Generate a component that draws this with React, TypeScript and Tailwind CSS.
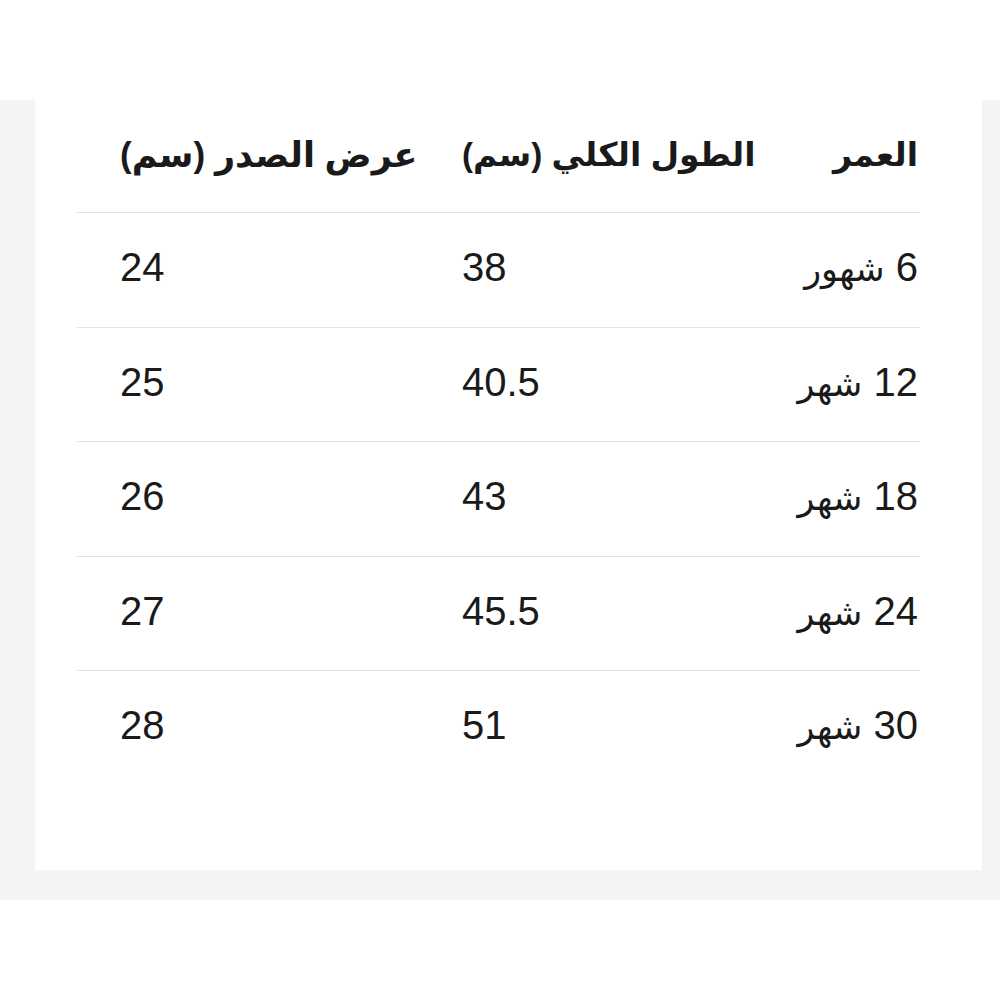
const rows: [string, string, string, string][] = [
  ["6", "شهور", "38", "24"],
  ["12", "شهر", "40.5", "25"],
  ["18", "شهر", "43", "26"],
  ["24", "شهر", "45.5", "27"],
  ["30", "شهر", "51", "28"],
];

const cols = "grid grid-cols-[140px_318px_385px] items-center";

export default function App() {
  return (
    <div className="h-[1000px] w-[1000px] bg-white pt-[100px] font-['Liberation_Sans','DejaVu_Sans',sans-serif] text-[#1a1a1a]">
      <div className="bg-[#f5f4f2] pb-[30px] pl-[35px] pr-[18px]">
        <div className="h-[770px] bg-white pl-[42px] pr-[62px]">
          <div dir="rtl" className={`${cols} h-[112px] pb-[2px] text-[33px] font-bold`}>
            <div className="pr-[2px] text-right">العمر</div>
            <div className="text-left">
              <span dir="rtl">الطول الكلي (سم)</span>
            </div>
            <div className="pl-[43px] text-left">
              <span dir="rtl" className="text-[35px]">عرض الصدر (سم)</span>
            </div>
          </div>
          {rows.map(([num, unit, length, chest]) => (
            <div
              key={num}
              dir="rtl"
              className={`${cols} h-[114.5px] border-t border-[#e2e2e2] pb-[5px] text-[40px]`}
            >
              <div className="pr-[2px] text-right">
                {num} <span className="text-[35px]">{unit}</span>
              </div>
              <div className="text-left">{length}</div>
              <div className="pl-[43px] text-left">{chest}</div>
            </div>
          ))}
        </div>
      </div>
    </div>
  );
}
